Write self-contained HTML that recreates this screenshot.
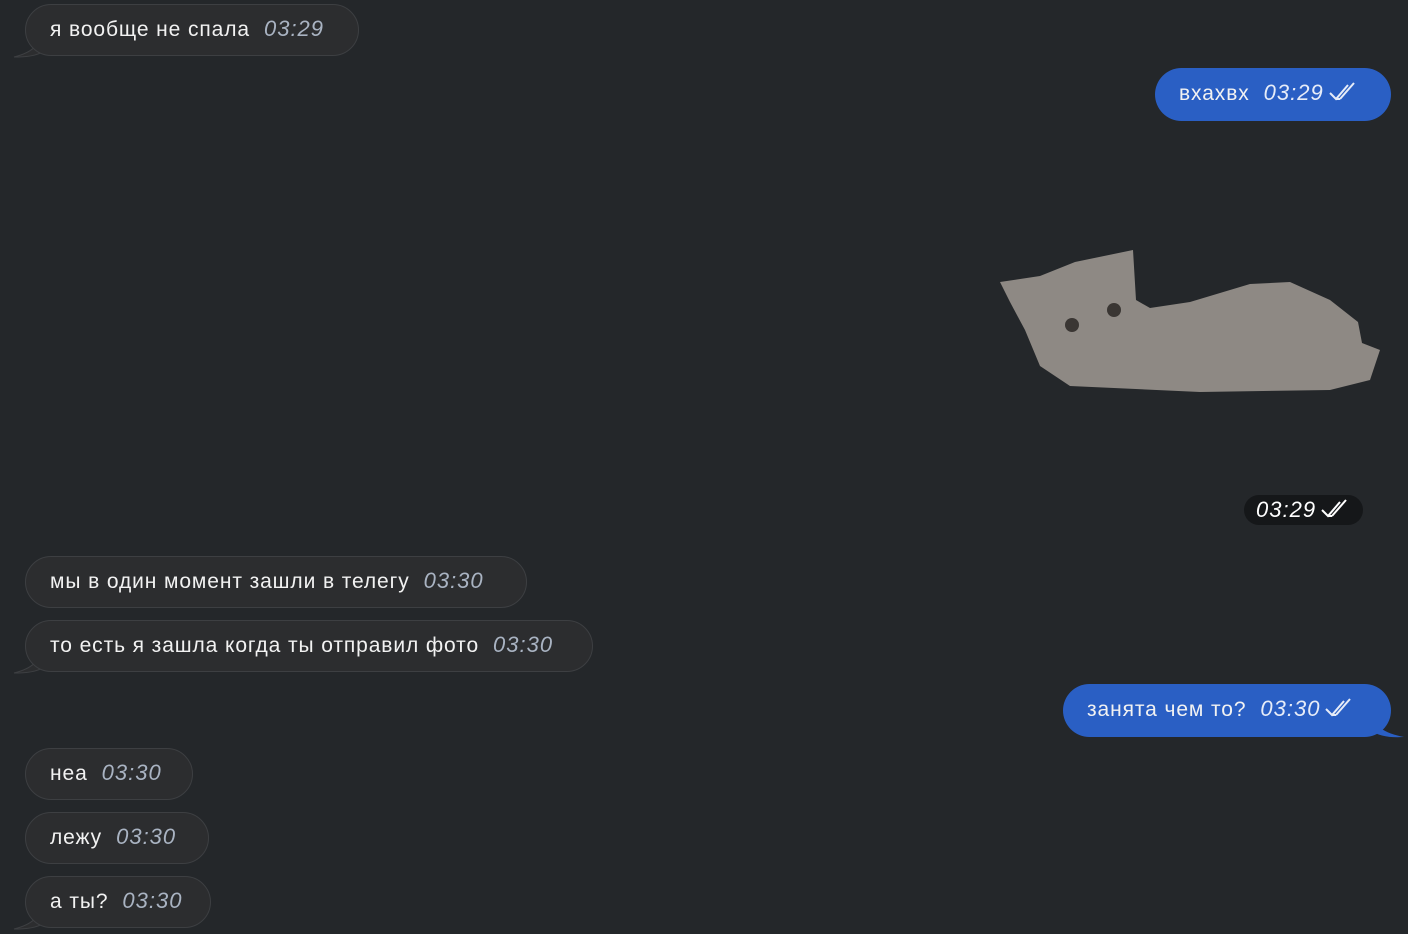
<!DOCTYPE html>
<html><head><meta charset="utf-8"><style>
body{margin:0;width:1408px;height:934px;background:#24272a;overflow:hidden;position:relative;font-family:"Liberation Sans","DejaVu Sans",sans-serif;}
.b{position:absolute;height:52px;border-radius:27px;box-sizing:border-box;color:#f2f2f2;font-size:21px;line-height:48px;padding:0 24px;white-space:nowrap;letter-spacing:0.9px}
.in{background:#2c2d2f;border:1px solid #3d3f42;left:25px;}
.out{background:#2a5fc4;line-height:50px}
.t{font-style:italic;color:#a9b3c2;margin-left:14px;font-size:22px;letter-spacing:1px}
.out .t{color:#e6ecf8}
.ck{display:inline-block;vertical-align:middle;margin-left:4px;margin-top:-4px}
svg.tail{position:absolute}
</style></head><body>
<svg class="tail" style="left:12px;top:30px" width="30" height="30"><path d="M30 0 C28 14 22 22 2 27 C14 27 24 26 30 22 Z" fill="#2c2d2f" stroke="#3d3f42" stroke-width="1"/></svg>
<div class="b in" style="top:4px;width:334px">я вообще не спала<span class="t">03:29</span></div>

<div class="b out" style="left:1155px;top:68px;width:236px;height:53px">вхахвх<span class="t">03:29</span><svg class="ck" width="30" height="20"><path d="M2 11 L8 17 L20 3 M12 17 L26 1 M8 17 L12 17" stroke="#e6ecf8" stroke-width="2" fill="none"/></svg></div>

<svg style="position:absolute;left:0;top:0" width="1408" height="934"><path d="M1000 282 L1040 276 L1075 262 L1133 250 L1136 300 L1150 308 L1190 302 L1250 284 L1290 282 L1330 300 L1358 322 L1362 343 L1380 350 L1370 380 L1330 390 L1200 392 L1070 386 L1040 366 L1025 330 L1010 302 Z" fill="#8e8984"/><circle cx="1072" cy="325" r="7" fill="#3a3633"/><circle cx="1114" cy="310" r="7" fill="#3a3633"/></svg>

<div style="position:absolute;left:1244px;top:495px;width:119px;height:30px;border-radius:15px;background:#151719;color:#fff;font-style:italic;font-size:22px;letter-spacing:1px;line-height:30px;padding-left:12px;box-sizing:border-box;white-space:nowrap">03:29<svg class="ck" width="30" height="20"><path d="M2 11 L8 17 L20 3 M12 17 L26 1 M8 17 L12 17" stroke="#fff" stroke-width="2" fill="none"/></svg></div>

<div class="b in" style="top:556px;width:502px">мы в один момент зашли в телегу<span class="t">03:30</span></div>
<svg class="tail" style="left:12px;top:646px" width="30" height="30"><path d="M30 0 C28 14 22 22 2 27 C14 27 24 26 30 22 Z" fill="#2c2d2f" stroke="#3d3f42" stroke-width="1"/></svg>
<div class="b in" style="top:620px;width:568px">то есть я зашла когда ты отправил фото<span class="t">03:30</span></div>

<svg class="tail" style="left:1370px;top:708px" width="36" height="32"><path d="M0 0 C2 14 8 24 34 29 C20 30 8 28 0 22 Z" fill="#2a5fc4"/></svg>
<div class="b out" style="left:1063px;top:684px;width:328px;height:53px">занята чем то?<span class="t">03:30</span><svg class="ck" width="30" height="20"><path d="M2 11 L8 17 L20 3 M12 17 L26 1 M8 17 L12 17" stroke="#e6ecf8" stroke-width="2" fill="none"/></svg></div>

<div class="b in" style="top:748px;width:168px">неа<span class="t">03:30</span></div>
<div class="b in" style="top:812px;width:184px">лежу<span class="t">03:30</span></div>
<svg class="tail" style="left:12px;top:902px" width="30" height="30"><path d="M30 0 C28 14 22 22 2 27 C14 27 24 26 30 22 Z" fill="#2c2d2f" stroke="#3d3f42" stroke-width="1"/></svg>
<div class="b in" style="top:876px;width:186px">а ты?<span class="t">03:30</span></div>
</body></html>
